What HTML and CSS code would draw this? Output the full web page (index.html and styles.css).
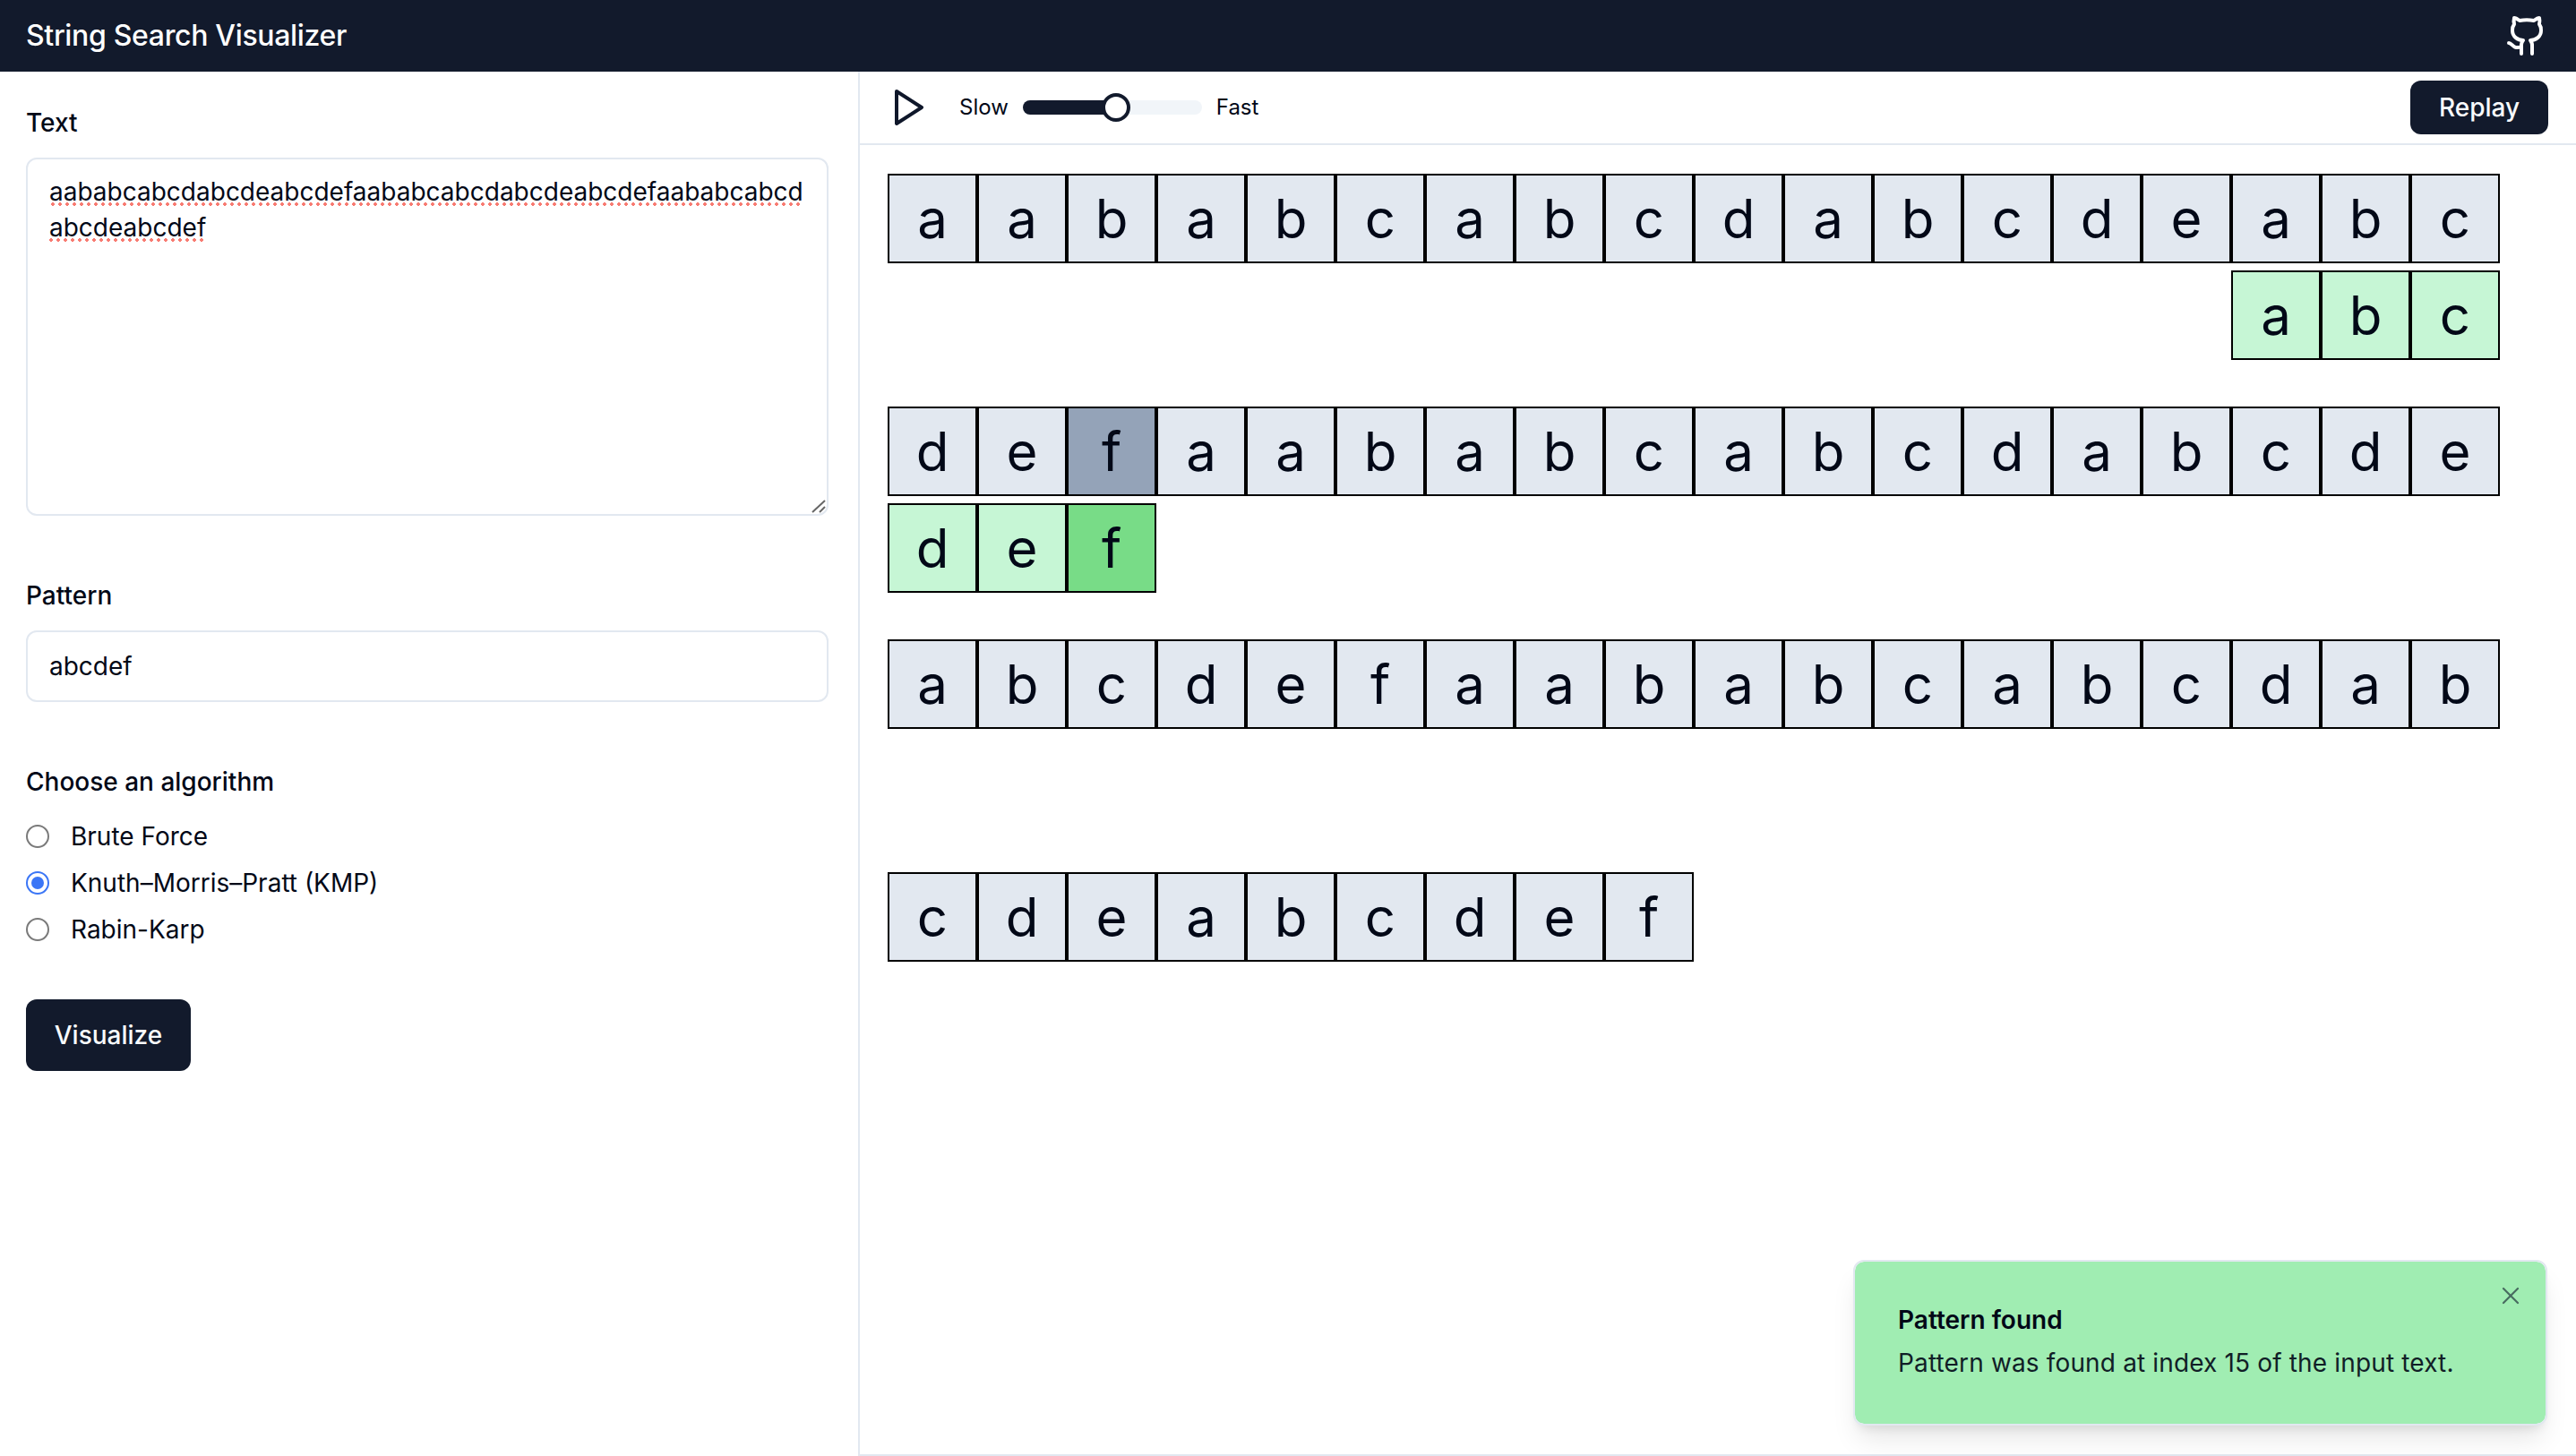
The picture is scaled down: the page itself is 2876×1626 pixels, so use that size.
FILE: index.html
```html
<!DOCTYPE html>
<html lang="en">
<head>
<meta charset="utf-8">
<title>String Search Visualizer</title>
<link rel="stylesheet" href="styles.css">
</head>
<body>
<header class="topbar">
  <h1 class="title">String Search Visualizer</h1>
  <a class="repo" aria-label="GitHub">
    <svg class="icon-48" viewBox="0 0 24 24" fill="none" stroke="#fff" stroke-width="2" stroke-linecap="round" stroke-linejoin="round"><path d="M15 22v-4a4.8 4.8 0 0 0-1-3.5c3 0 6-2 6-5.5.08-1.25-.27-2.48-1-3.5.28-1.15.28-2.35 0-3.5 0 0-1 0-3 1.5-2.64-.5-5.36-.5-8 0C6 2 5 2 5 2c-.3 1.15-.3 2.35 0 3.5A5.403 5.403 0 0 0 4 9c0 3.5 3 5.5 6 5.5-.39.49-.68 1.05-.85 1.65-.17.6-.22 1.23-.15 1.85v4"/><path d="M9 18c-4.51 2-5-2-7-2"/></svg>
  </a>
</header>
<div class="layout">
  <aside class="sidebar">
    <div class="field">
      <label class="label">Text</label>
      <div class="textarea"><span class="misspelled">aababcabcdabcdeabcdefaababcabcdabcdeabcdefaababcabcdabcdeabcdef</span>
        <svg class="grip" viewBox="0 0 16 16" fill="none" stroke="#666" stroke-width="2"><path d="M1 14 15 1"/><path d="M9 14 15 8"/></svg>
      </div>
    </div>
    <div class="field">
      <label class="label">Pattern</label>
      <input class="input" type="text" value="abcdef">
    </div>
    <div class="field algo">
      <span class="label">Choose an algorithm</span>
      <div class="radios">
        <label class="radio"><input type="radio" name="algo">Brute Force</label>
        <label class="radio"><input type="radio" name="algo" checked>Knuth–Morris–Pratt (KMP)</label>
        <label class="radio"><input type="radio" name="algo">Rabin-Karp</label>
      </div>
    </div>
    <button class="btn visualize">Visualize</button>
  </aside>
  <main class="main">
    <div class="toolbar">
      <svg class="icon-48 play" viewBox="0 0 24 24" fill="none" stroke="#0f172a" stroke-width="2" stroke-linecap="round" stroke-linejoin="round"><polygon points="5 3 19 12 5 21 5 3"/></svg>
      <span class="speed slow">Slow</span>
      <div class="slider"><div class="slider-fill"></div><div class="slider-thumb"></div></div>
      <span class="speed fast">Fast</span>
      <button class="btn replay">Replay</button>
    </div>
    <div class="board">
      <section class="block">
        <div class="row">
          <div class="cell">a</div><div class="cell">a</div><div class="cell">b</div><div class="cell">a</div><div class="cell">b</div><div class="cell">c</div><div class="cell">a</div><div class="cell">b</div><div class="cell">c</div><div class="cell">d</div><div class="cell">a</div><div class="cell">b</div><div class="cell">c</div><div class="cell">d</div><div class="cell">e</div><div class="cell">a</div><div class="cell">b</div><div class="cell">c</div>
        </div>
        <div class="row" style="margin-left:1500px">
          <div class="cell match">a</div><div class="cell match">b</div><div class="cell match">c</div>
        </div>
      </section>
      <section class="block">
        <div class="row">
          <div class="cell">d</div><div class="cell">e</div><div class="cell current">f</div><div class="cell">a</div><div class="cell">a</div><div class="cell">b</div><div class="cell">a</div><div class="cell">b</div><div class="cell">c</div><div class="cell">a</div><div class="cell">b</div><div class="cell">c</div><div class="cell">d</div><div class="cell">a</div><div class="cell">b</div><div class="cell">c</div><div class="cell">d</div><div class="cell">e</div>
        </div>
        <div class="row">
          <div class="cell match">d</div><div class="cell match">e</div><div class="cell hit">f</div>
        </div>
      </section>
      <section class="block">
        <div class="row">
          <div class="cell">a</div><div class="cell">b</div><div class="cell">c</div><div class="cell">d</div><div class="cell">e</div><div class="cell">f</div><div class="cell">a</div><div class="cell">a</div><div class="cell">b</div><div class="cell">a</div><div class="cell">b</div><div class="cell">c</div><div class="cell">a</div><div class="cell">b</div><div class="cell">c</div><div class="cell">d</div><div class="cell">a</div><div class="cell">b</div>
        </div>
      </section>
      <section class="block">
        <div class="row">
          <div class="cell">c</div><div class="cell">d</div><div class="cell">e</div><div class="cell">a</div><div class="cell">b</div><div class="cell">c</div><div class="cell">d</div><div class="cell">e</div><div class="cell">f</div>
        </div>
      </section>
    </div>
    <div class="toast" role="status">
      <svg class="toast-close" viewBox="0 0 24 24" fill="none" stroke="#0f172a" stroke-width="1.6" stroke-linecap="round" stroke-linejoin="round"><path d="M18 6 6 18"/><path d="m6 6 12 12"/></svg>
      <div class="toast-title">Pattern found</div>
      <div class="toast-desc">Pattern was found at index 15 of the input text.</div>
    </div>
  </main>
</div>
</body>
</html>
```
FILE: styles.css
```css
* { box-sizing: border-box; }
html, body { height: 100%; }
body {
  margin: 0;
  display: flex;
  flex-direction: column;
  font-family: Inter, "Liberation Sans", sans-serif;
  font-size: 28px;
  line-height: 40px;
  color: #020817;
  background: #fff;
  overflow: hidden;
}
.topbar {
  flex: none;
  height: 80px;
  display: flex;
  align-items: center;
  justify-content: space-between;
  padding: 0 31px 0 29px;
  background: #121a2c;
  color: #fff;
}
.title { margin: 0; font-size: 32px; font-weight: 500; line-height: 40px; letter-spacing: -0.33px; }
.repo { display: flex; }
.icon-48 { width: 48px; height: 48px; display: block; flex: none; }
.layout { flex: 1; display: flex; min-height: 0; }
.sidebar {
  flex: none;
  width: 960px;
  border-right: 2px solid #e2e8f0;
  padding: 37px 33px 0 29px;
  display: flex;
  flex-direction: column;
  align-items: stretch;
  gap: 69px;
}
.field { display: flex; flex-direction: column; gap: 19px; }
.label { font-weight: 500; }
.textarea {
  position: relative;
  height: 400px;
  padding: 16px 24px;
  border: 2px solid #e2e8f0;
  border-radius: 12px;
  overflow: hidden;
  word-break: break-all;
}
.misspelled {
  background: radial-gradient(circle at center, #f87b72 1.6px, transparent 2.1px) 0 calc(100% - 1px) / 8px 4px repeat-x;
}
.grip {
  position: absolute;
  right: 1px;
  bottom: 0;
  width: 16px;
  height: 16px;
}
.input {
  height: 80px;
  padding: 0 24px;
  border: 2px solid #e2e8f0;
  border-radius: 12px;
  font: inherit;
  color: inherit;
  outline: none;
}
.algo { gap: 21px; }
.radios { display: flex; flex-direction: column; gap: 12px; }
.radio { display: flex; align-items: center; gap: 24px; height: 40px; }
.radio input {
  appearance: none;
  width: 26px;
  height: 26px;
  margin: 0;
  padding: 4px;
  flex: none;
  border: 2px solid #7a7a7a;
  border-radius: 50%;
  background: #fff content-box;
}
.radio input:checked {
  border-color: #3b76f6;
  background: #3b76f6 content-box;
}
.btn {
  border: 0;
  border-radius: 12px;
  background: #121a2c;
  color: #f8fafc;
  font: inherit;
  font-weight: 500;
  padding: 0;
}
.visualize { width: 184px; height: 80px; margin-top: -11px; }
.main { flex: 1; min-width: 0; position: relative; border-bottom: 2px solid #e2e8f0; }
.toolbar {
  height: 82px;
  display: flex;
  align-items: center;
  padding: 0 31px;
  border-bottom: 2px solid #e2e8f0;
}
.speed { font-size: 24px; line-height: 32px; }
.slow { margin-left: 32px; }
.slider {
  position: relative;
  width: 200px;
  height: 16px;
  margin-left: 16px;
  border-radius: 8px;
  background: #f1f5f9;
}
.slider-fill { width: 104px; height: 100%; border-radius: 8px; background: #121a2c; }
.slider-thumb {
  position: absolute;
  left: 88px;
  top: -8px;
  width: 32px;
  height: 32px;
  border-radius: 50%;
  border: 4px solid #121a2c;
  background: #fff;
}
.fast { margin-left: 16px; }
.replay { margin-left: auto; width: 154px; height: 60px; }
.board { padding: 32px 31px; display: flex; flex-direction: column; gap: 52px; }
.block { height: 208px; display: flex; flex-direction: column; gap: 8px; }
.row { display: flex; }
.cell {
  width: 100px;
  height: 100px;
  flex: none;
  display: flex;
  align-items: center;
  justify-content: center;
  border: 2px solid #000;
  background: #e2e8f0;
  font-size: 60px;
  line-height: 60px;
}
.cell.current { background: #94a3b8; }
.cell.match { background: #c6f6d5; }
.cell.hit { background: #78dc87; }
.toast {
  position: absolute;
  right: 32px;
  bottom: 32px;
  width: 775px;
  height: 185px;
  padding: 45px 47px 0 48px;
  border: 2px solid #e2e8f0;
  border-radius: 12px;
  background: #a0edb2;
  background-clip: padding-box;
  box-shadow: 0 20px 30px -6px rgba(0,0,0,.1), 0 8px 12px -6px rgba(0,0,0,.1);
}
.toast-title { font-weight: 600; }
.toast-desc { margin-top: 8px; opacity: .9; letter-spacing: 0.15px; }
.toast-close {
  position: absolute;
  right: 23px;
  top: 22px;
  width: 32px;
  height: 32px;
  opacity: .6;
}
```
